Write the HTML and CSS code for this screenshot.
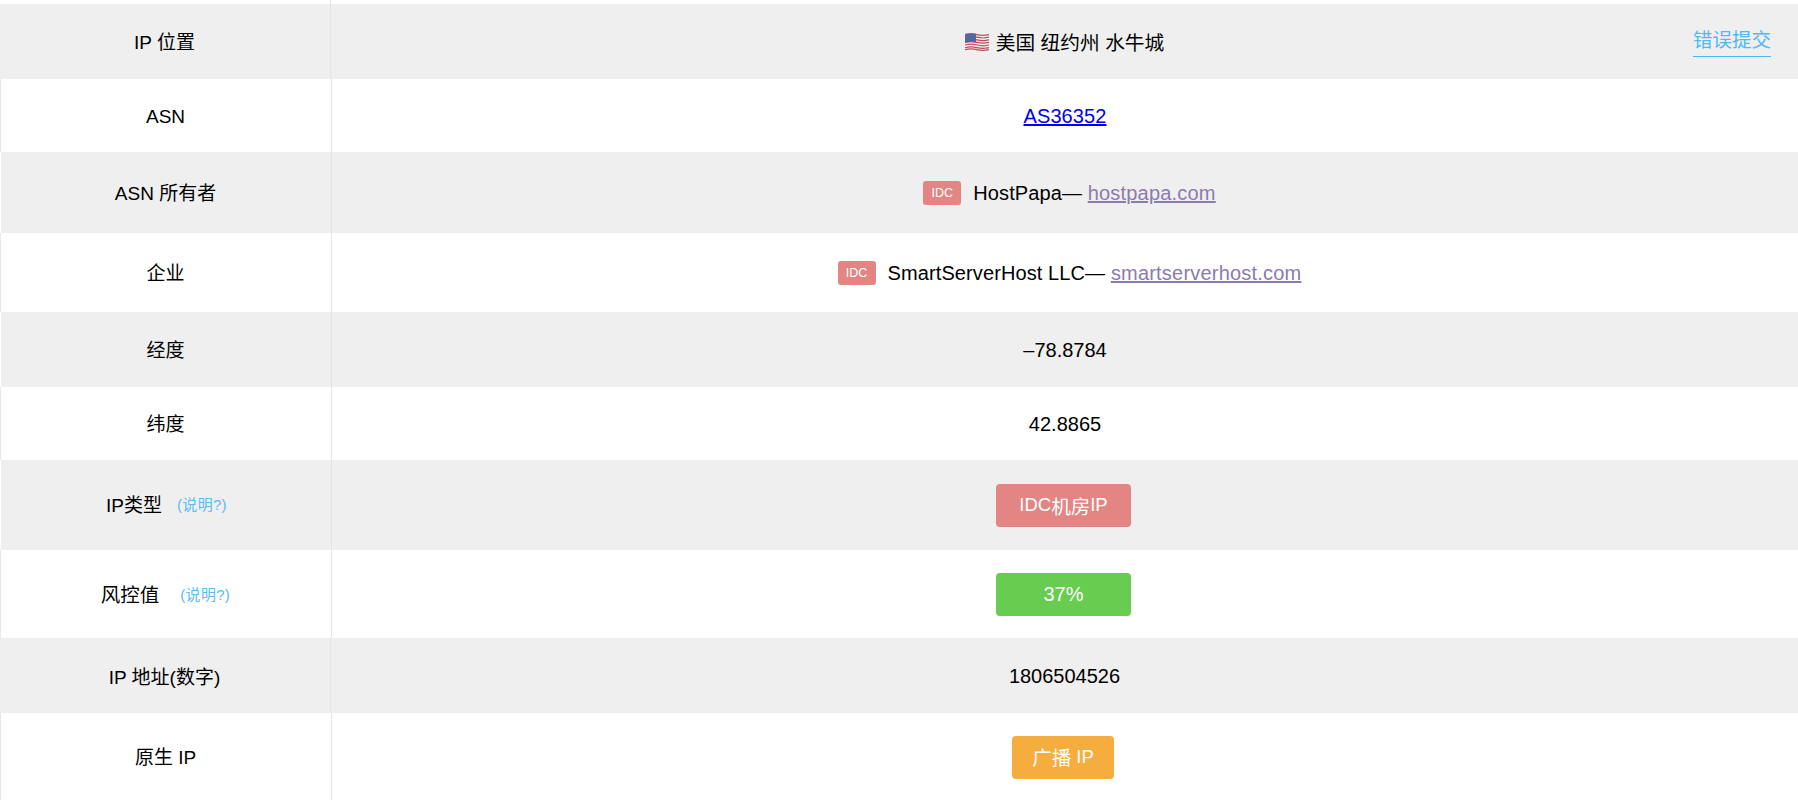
FILE: index.html
```html
<!DOCTYPE html>
<html lang="zh">
<head>
<meta charset="utf-8">
<title>IP 信息</title>
<link rel="stylesheet" href="styles.css">
</head>
<body>
<div class="info-table">
  <div class="top-gap"></div>
  <div class="row alt flush h75">
    <div class="label">IP 位置</div>
    <div class="value">
      <svg class="flag" viewBox="0 0 24 18" aria-hidden="true">
        <path d="M0 1.2q6-1.6 12 0t12 0V16.6q-6 1.6-12 0t-12 0Z" fill="#f3eeee"/>
        <path d="M0 1.6q6-1.6 12 0t12 0M0 4.2q6-1.6 12 0t12 0M0 6.8q6-1.6 12 0t12 0M0 9.4q6-1.6 12 0t12 0M0 12q6-1.6 12 0t12 0M0 14.6q6-1.6 12 0t12 0M0 16.6q6-1.6 12 0t12 0" fill="none" stroke="#c64a5c" stroke-width="1.2"/>
        <path d="M0 1q5.5-1.4 11 -.2V9.6q-5.5-1.2-11 .2Z" fill="#56669f"/>
      </svg>
      <span class="place">美国 纽约州 水牛城</span>
      <a class="report" href="#">错误提交</a>
    </div>
  </div>
  <div class="row h73">
    <div class="label latin">ASN</div>
    <div class="value text"><a class="fresh" href="#">AS36352</a></div>
  </div>
  <div class="row alt h81">
    <div class="label">ASN 所有者</div>
    <div class="value text shifted"><span class="tag">IDC</span><span class="owner">HostPapa— </span><a class="seen" href="#">hostpapa.com</a></div>
  </div>
  <div class="row h79">
    <div class="label">企业</div>
    <div class="value text shifted"><span class="tag">IDC</span><span class="owner">SmartServerHost LLC— </span><a class="seen" href="#">smartserverhost.com</a></div>
  </div>
  <div class="row alt h75">
    <div class="label">经度</div>
    <div class="value text">–78.8784</div>
  </div>
  <div class="row h73">
    <div class="label">纬度</div>
    <div class="value text">42.8865</div>
  </div>
  <div class="row alt h90">
    <div class="label raised nudged">IP类型<a class="help" href="#">(说明?)</a></div>
    <div class="value"><span class="pill wide red">IDC<span class="cn">机房</span>IP</span></div>
  </div>
  <div class="row h88">
    <div class="label"><span class="large">风控值</span><a class="help far" href="#">(说明?)</a></div>
    <div class="value"><span class="pill wide green big">37%</span></div>
  </div>
  <div class="row alt flush h75">
    <div class="label mid">IP 地址(数字)</div>
    <div class="value text">1806504526</div>
  </div>
  <div class="row h89">
    <div class="label raised">原生 IP</div>
    <div class="value"><span class="pill narrow orange"><span class="cn">广播</span> IP</span></div>
  </div>
</div>
</body>
</html>
```
FILE: styles.css
```css
* { box-sizing: border-box; }
html, body { margin: 0; height: 800px; overflow: hidden; background: #fff; }
body { font-family: "Liberation Sans", "Noto Sans CJK SC", sans-serif; font-size: 20px; color: #000; }
.info-table { display: flex; flex-direction: column; }
.top-gap { height: 4px; margin-left: 330px; width: 1px; background: #e4e4e4; }
.row { display: grid; grid-template-columns: 331px 1fr; align-items: stretch; border-left: 1px solid #e8e8e8; flex: none; }
.row.alt { background: #efefef; }
.row.flush { border-left: 0; }
.row.alt:not(.flush) { border-left-color: #fff; }
.h73 { height: 73px; } .h75 { height: 75px; } .h79 { height: 79px; } .h81 { height: 81px; }
.h88 { height: 88px; } .h89 { height: 89px; } .h90 { height: 90px; }
.label { display: flex; align-items: center; justify-content: center; font-size: 19px; white-space: pre; border-right: 1px solid #e4e4e4; padding: 0 1px 2px 0; }
.label.latin { padding: 2px 1px 0 0; }
.label.mid { padding-bottom: 0; }
.label.raised { padding-bottom: 4px; }
.label.nudged { padding-left: 2px; }
.large { font-size: 19.5px; }
.help { margin-left: 15px; color: #5bbcf8; font-size: 15px; letter-spacing: 0.3px; text-decoration: none; }
.far { margin-left: 21px; }
.value { position: relative; display: flex; align-items: center; justify-content: center; white-space: pre; }
.value.text { padding-top: 2px; }
.value.shifted { padding-left: 9px; }
.flag { width: 24px; height: 18px; margin-right: 7px; }
.place { font-size: 19.7px; }
.report { position: absolute; right: 27px; top: 23px; color: #4fb9f8; text-decoration: none; font-size: 19.5px; line-height: 26px; padding-bottom: 3px; border-bottom: 1px solid #4fb9f8; }
.fresh { color: #0000ee; letter-spacing: 0.1px; }
.seen { color: #8b7bb0; letter-spacing: 0.2px; }
.owner { letter-spacing: 0.1px; }
.tag { display: inline-flex; align-items: center; justify-content: center; width: 38px; height: 24px; margin: -2px 12px 0 0; border-radius: 3px; background: #e28583; color: #fff; font-size: 12.5px; }
.pill { display: inline-flex; align-items: center; justify-content: center; height: 43px; margin-right: 3px; border-radius: 4px; color: #fff; font-size: 18.5px; }
.cn { font-size: 19.5px; }
.big { font-size: 20px; }
.wide { width: 135px; }
.narrow { width: 102px; margin-right: 4px; padding-bottom: 2px; }
.red { background: #e28583; }
.green { background: #67cc4f; }
.orange { background: #f5ae3e; }
```
